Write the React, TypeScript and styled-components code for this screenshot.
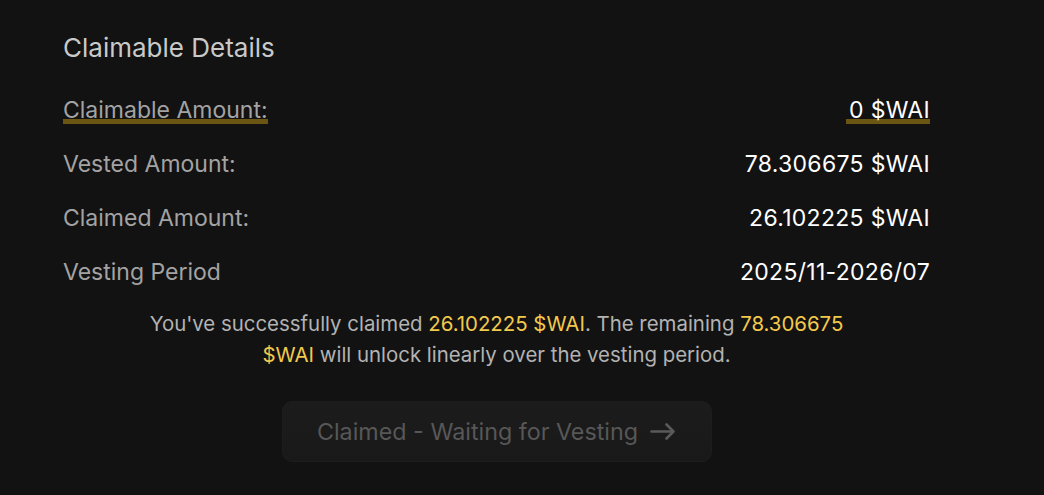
import React from "react";
import styled, { createGlobalStyle } from "styled-components";

const Global = createGlobalStyle`
  html, body { margin: 0; padding: 0; background: #121212; }
  body { font-family: Inter, "Noto Sans", sans-serif; }
`;

const Page = styled.div`
  width: 1044px;
  height: 495px;
  box-sizing: border-box;
  padding: 33px 114px 0 63px;
  display: flex;
  flex-direction: column;
  background: #121212;
`;

const Title = styled.h2`
  margin: 0;
  font-size: 26px;
  font-weight: 400;
  color: #c9c9c9;
  line-height: 30px;
`;

const List = styled.div`
  margin-top: 7px;
  display: flex;
  flex-direction: column;
`;

const Row = styled.div`
  display: flex;
  justify-content: space-between;
  align-items: flex-end;
  height: 54px;
  font-size: 23px;
`;

const Cell = styled.span<{ $mark?: boolean }>`
  display: inline-block;
  line-height: 18px;
  border-bottom: 5px solid ${(p) => (p.$mark ? "#6b5512" : "transparent")};
`;

const Label = styled(Cell)`
  color: #a3a3a3;
`;

const Value = styled(Cell)`
  color: #ffffff;
  letter-spacing: 0.3px;
  padding-left: ${(p) => (p.$mark ? "3px" : "0")};
`;

const Note = styled.p`
  margin: 22px 0 0;
  text-align: center;
  font-size: 20.4px;
  line-height: 31px;
  color: #b3b3b3;
`;

const Hi = styled.span`
  color: #f2c94c;
`;

const Button = styled.button`
  margin: 31px auto 0;
  width: 430px;
  height: 61px;
  border: 1px solid #1d1d1d;
  border-radius: 10px;
  background: linear-gradient(#1c1c1c, #191919);
  color: #575757;
  font-family: inherit;
  font-size: 23.3px;
  display: flex;
  align-items: center;
  justify-content: center;
  gap: 12px;
  padding: 0;
`;

const rows = [
  { label: "Claimable Amount:", value: "0 $WAI", mark: true },
  { label: "Vested Amount:", value: "78.306675 $WAI" },
  { label: "Claimed Amount:", value: "26.102225 $WAI" },
  { label: "Vesting Period", value: "2025/11-2026/07" },
];

export default function App() {
  return (
    <>
      <Global />
      <Page>
        <Title>Claimable Details</Title>
        <List>
          {rows.map((r) => (
            <Row key={r.label}>
              <Label $mark={r.mark}>{r.label}</Label>
              <Value $mark={r.mark}>{r.value}</Value>
            </Row>
          ))}
        </List>
        <Note>
          You've successfully claimed <Hi>26.102225 $WAI</Hi>. The remaining{" "}
          <Hi>78.306675</Hi>
          <br />
          <Hi>$WAI</Hi> will unlock linearly over the vesting period.
        </Note>
        <Button disabled>
          Claimed - Waiting for Vesting
          <svg width="26" height="17" viewBox="0 0 26 17" fill="none" stroke="#5a5a5a" strokeWidth="2.6" strokeLinecap="round" strokeLinejoin="round">
            <path d="M1.5 8.5h22M16.5 1.5l7 7-7 7" />
          </svg>
        </Button>
      </Page>
    </>
  );
}
